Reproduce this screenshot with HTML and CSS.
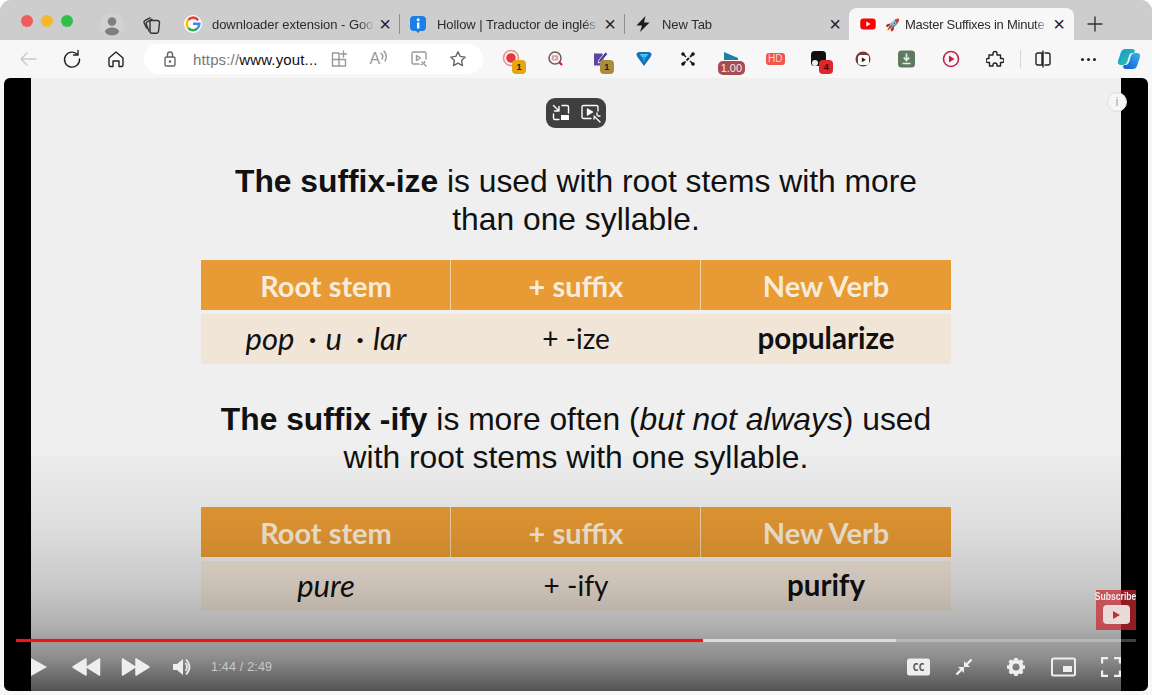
FILE: index.html
```html
<!DOCTYPE html>
<html>
<head>
<meta charset="utf-8"/>
<title>Master Suffixes in Minutes</title>
<link rel="stylesheet" href="styles.css">
</head>
<body>
<div class="window">

<!-- tab strip -->
<div class="tabstrip">
  <div class="lights"><i class="red"></i><i class="yellow"></i><i class="green"></i></div>
  <div class="avatar">
    <svg width="24" height="24" viewBox="0 0 24 24"><circle cx="12" cy="8.500" r="4.300" fill="#808080"/><ellipse cx="12" cy="18.500" rx="7" ry="4" fill="#808080"/></svg>
  </div>
  <div class="collections">
    <svg class="ico" width="20" height="20" viewBox="0 0 20 20"><path d="M8.500 5.500h7.500a2 2 0 0 1 2 2.300L17 16.500a2 2 0 0 1-2 1.800H10.500a2 2 0 0 1-2-2z" transform="translate(-.5 0)"/><path d="M7 16 4.300 9.500a2 2 0 0 1 1-2.700L10 4.200"/><path d="M4.500 13 2.200 8a2 2 0 0 1 1-2.700L8 2.800"/></svg>
  </div>
  <div class="tab sep">
    <span class="favicon google">
      <svg width="16" height="16" viewBox="0 0 16 16" fill="none" stroke-width="2.600"><path d="M13.200 4.200A6.300 6.300 0 0 0 3.300 3.900" stroke="#ea4335"/><path d="M3.300 3.900A6.300 6.300 0 0 0 3.300 12.100" stroke="#fbbc05"/><path d="M3.300 12.100A6.300 6.300 0 0 0 12.800 12" stroke="#34a853"/><path d="M12.800 12A6.300 6.300 0 0 0 14.300 7.800H8" stroke="#4285f4"/></svg>
    </span>
    <span class="tabtitle">downloader extension - Goo</span>
    <span class="close">×</span>
  </div>
  <div class="tab sep">
    <span class="favicon">
      <svg width="18" height="18" viewBox="0 0 18 18"><path d="M5 1h8a4 4 0 0 1 4 4v7a4 4 0 0 1-4 4h-2l-2 2-2-2H5a4 4 0 0 1-4-4V5a4 4 0 0 1 4-4z" fill="#1a7fe8"/><rect x="8" y="7.500" width="2.400" height="6" fill="#fff"/><circle cx="9.200" cy="4.800" r="1.500" fill="#fff"/></svg>
    </span>
    <span class="tabtitle">Hollow | Traductor de inglés</span>
    <span class="close">×</span>
  </div>
  <div class="tab">
    <span class="favicon">
      <svg width="16" height="18" viewBox="0 0 16 18"><path d="M10.500 1 1.500 10.500H7L5 17l9.500-9.500H9z" fill="#1b1b1b"/></svg>
    </span>
    <span class="tabtitle">New Tab</span>
    <span class="close">×</span>
  </div>
  <div class="tab active">
    <span class="favicon">
      <svg width="16" height="12" viewBox="0 0 18 14"><rect width="18" height="13" y=".5" rx="3.500" fill="#f00"/><path d="M7 4v6l5-3z" fill="#fff"/></svg>
    </span>
    <span class="rocket">🚀</span>
    <span class="tabtitle">Master Suffixes in Minute</span>
    <span class="close">×</span>
  </div>
  <div class="newtabbtn">
    <svg class="ico" width="16" height="16" viewBox="0 0 16 16"><path d="M8 1v14M1 8h14"/></svg>
  </div>
</div>

<!-- toolbar -->
<div class="toolbar">
  <div class="navbtn">
    <svg class="ico pale" width="18" height="18" viewBox="0 0 18 18"><path d="M17 9H2M8 3 2 9l6 6"/></svg>
  </div>
  <div class="navbtn">
    <svg class="ico dark" width="20" height="20" viewBox="0 0 20 20"><path d="M15.500 5.500A7.500 7.500 0 1 0 17.500 10"/><path d="M16 1.500v4.500h-4.500"/></svg>
  </div>
  <div class="navbtn">
    <svg class="ico dark" width="18" height="18" viewBox="0 0 18 18"><path d="M2 8 9 2l7 6v7a1.500 1.500 0 0 1-1.500 1.500H12V11H6v5.500H3.500A1.500 1.500 0 0 1 2 15z"/></svg>
  </div>
  <div class="address">
    <svg class="ico grey lock" width="14" height="16" viewBox="0 0 14 16"><rect x="2" y="6" width="10" height="9" rx="1.500"/><path d="M4.500 6V3.500a2.500 2.500 0 0 1 5 0V6"/><circle cx="7" cy="10.500" r=".6"/></svg>
    <span class="url"><span class="scheme">https://</span>www.yout...</span>
    <span class="addr-icons">
      <svg class="ico light" width="18" height="18" viewBox="0 0 18 18"><path d="M9 3H2.500v13h13V9.500M2.500 9.500h13M9 3v13M13.500 1v6M10.500 4h6"/></svg>
      <span class="readaloud">A<svg class="ico light" width="8" height="12" viewBox="0 0 8 12"><path d="M1 3q3 3 1 6M4 1q4 5 1 10"/></svg></span>
      <svg class="ico light" width="18" height="18" viewBox="0 0 18 18"><path d="M16 9V3.500A1.500 1.500 0 0 0 14.500 2h-11A1.500 1.500 0 0 0 2 3.500v9A1.500 1.500 0 0 0 3.500 14H9"/><path d="M6.500 5.500v5l4-2.500zM12 12l4 4M14.500 11.500v1M11 14.500h1"/></svg>
      <svg class="ico grey" width="18" height="18" viewBox="0 0 18 18"><path d="m9 1.800 2.200 4.600 5 .7-3.600 3.500.9 5L9 13.200l-4.500 2.400.9-5L1.800 7.100l5-.7z"/></svg>
    </span>
  </div>

  <div class="extensions">
    <div class="ext">
      <svg width="20" height="20" viewBox="0 0 20 20"><circle cx="9" cy="9" r="7.500" fill="none" stroke="#eb8f8f" stroke-width="1.600"/><circle cx="9" cy="9" r="4.800" fill="#e8383c"/></svg>
      <b class="badge gold">1</b>
    </div>
    <div class="ext">
      <svg width="18" height="18" viewBox="0 0 18 18"><circle cx="8" cy="8" r="6" fill="none" stroke="#6b5a5e" stroke-width="1.500"/><rect x="4.800" y="5.300" width="6.400" height="5.200" rx="1.200" fill="#e59aa4"/><path d="M6.900 6.400v3l2.500-1.500z" fill="#fff"/><path d="m12 12 3 3" stroke="#d8203a" stroke-width="2.400"/></svg>
    </div>
    <div class="ext">
      <svg width="18" height="20" viewBox="0 0 18 20"><path d="M3 4.500h8L13 7v9.500H3z" fill="#5b46a8"/><path d="M8 11 14.500 3l2.200 2-6.700 8-3 1z" fill="#4a3798" stroke="#f7f7f7" stroke-width=".8"/></svg>
      <b class="badge olive">1</b>
    </div>
    <div class="ext">
      <svg width="16" height="16" viewBox="0 0 16 16"><path d="M3.500 1h9q3 0 3 2.500 0 1.200-1 2.500L8 15 1.500 6q-1-1.300-1-2.500Q.5 1 3.500 1z" fill="#1570b8"/><path d="M3.500 3h9l-2.500 3.200h-4z" fill="#4fc0ee"/><path d="M6 6.200h4L8 11.500z" fill="#2a9ad8"/></svg>
    </div>
    <div class="ext">
      <svg width="16" height="16" viewBox="0 0 16 16"><path d="M3 13 13 3" stroke="#222" stroke-width="2" stroke-dasharray="3.500 1.500"/><path d="M3 3l3 3M10 10l3 3" stroke="#222" stroke-width="1.600"/><circle cx="3" cy="3" r="1.800" fill="#111"/><circle cx="13" cy="3" r="1.800" fill="#111"/><circle cx="3" cy="13" r="1.800" fill="#111"/><circle cx="13" cy="13" r="1.800" fill="#111"/></svg>
    </div>
    <div class="ext speed">
      <svg width="16" height="8" viewBox="0 0 16 8"><path d="M1 0v8h14v-2z" fill="#1f7fa5"/></svg>
      <b>1.00</b>
    </div>
    <div class="ext">
      <span class="hd">HD</span>
    </div>
    <div class="ext">
      <svg width="16" height="16" viewBox="0 0 16 16"><rect width="15" height="15" rx="3.500" fill="#111"/><circle cx="4" cy="12" r="3" fill="#eee"/></svg>
      <b class="badge redb">4</b>
    </div>
    <div class="ext">
      <svg width="18" height="18" viewBox="0 0 18 18"><circle cx="9" cy="9" r="7.500" fill="#7a3838"/><rect x="4" y="5" width="11" height="10" rx="2.500" fill="#fff"/><path d="M7.800 7.200v5l4-2.500z" fill="#222"/></svg>
    </div>
    <div class="ext">
      <svg width="17" height="18" viewBox="0 0 17 18"><rect y=".5" width="17" height="17" rx="3.500" fill="#5e7a60"/><path d="M8.500 3.500v6.500M5.700 7.500l2.800 3 2.800-3M4.500 13.500h8" stroke="#e8efe8" stroke-width="1.700" fill="none"/></svg>
    </div>
    <div class="ext">
      <svg width="18" height="18" viewBox="0 0 18 18"><circle cx="9" cy="9" r="7.500" fill="none" stroke="#c8204e" stroke-width="1.600"/><path d="M7 5.500v7l5.500-3.500z" fill="#c8204e"/></svg>
    </div>
    <div class="ext">
      <svg class="ico dark" width="18" height="18" viewBox="0 0 18 18"><path d="M7 3.500a2 2 0 0 1 4 0V5h3.500v3.500H16a2 2 0 0 1 0 4h-1.500V16H11v-1a2 2 0 0 0-4 0v1H3.500v-3.500H2a2 2 0 0 1 0-4h1V5h4z"/></svg>
    </div>
    <span class="divider"></span>
  </div>

  <div class="split">
    <svg class="ico dark" width="18" height="18" viewBox="0 0 18 18"><path d="M8 3H4a2 2 0 0 0-2 2v8a2 2 0 0 0 2 2h4zM11 3h3a2 2 0 0 1 2 2v8a2 2 0 0 1-2 2h-3M9 1v16"/></svg>
  </div>
  <div class="more"><i></i><i></i><i></i></div>
  <div class="copilot">
    <svg width="24" height="22" viewBox="0 0 24 22">
      <defs>
        <linearGradient id="copL" x1="0" y1="0" x2="1" y2="1"><stop offset="0" stop-color="#1f8fd8"/><stop offset=".6" stop-color="#22b8b0"/><stop offset="1" stop-color="#5fd08a"/></linearGradient>
        <linearGradient id="copR" x1="0" y1="1" x2="1" y2="0"><stop offset="0" stop-color="#1556d8"/><stop offset="1" stop-color="#36b4f0"/></linearGradient>
      </defs>
      <path d="M8.500 1H15q2.500 0 3 2l-1 2h-1.500q-2.500 0-3.500 3l-1.500 5q-1 4-5 4H4Q.2 17 1 13L3.800 4.500Q5 1 8.500 1z" fill="url(#copL)"/>
      <path d="M15.500 21H9q-2.500 0-3-2l1-2h1.500q2.500 0 3.500-3l1.500-5q1-4 5-4H20q3.800 0 3 4l-2.800 8.500Q19 21 15.500 21z" fill="url(#copR)"/>
    </svg>
  </div>
</div>

<!-- video -->
<div class="video">
  <div class="slide">
    <h2 class="heading"><b>The suffix-ize</b> is used with root stems with more<br>than one syllable.</h2>
    <div class="stable">
      <div class="shead">Root stem</div>
      <div class="shead">+ suffix</div>
      <div class="shead">New Verb</div>
      <div class="scell"><em>pop<span class="dot">•</span>u<span class="dot">•</span>lar</em></div>
      <div class="scell">+ -ize</div>
      <div class="scell"><b>popularize</b></div>
    </div>
    <h2 class="heading second"><b>The suffix -ify</b> is more often (<em>but not always</em>) used<br>with root stems with one syllable.</h2>
    <div class="stable">
      <div class="shead">Root stem</div>
      <div class="shead">+ suffix</div>
      <div class="shead">New Verb</div>
      <div class="scell"><em>pure</em></div>
      <div class="scell">+ -ify</div>
      <div class="scell"><b>purify</b></div>
    </div>
  </div>

  <div class="shade"></div>

  <div class="pill">
    <svg class="ico white" width="20" height="20" viewBox="0 0 20 20"><path d="M11 2.500h5a1.500 1.500 0 0 1 1.500 1.500v6M2.500 11v4a1.500 1.500 0 0 0 1.500 1.500h4M2.500 2.500 8 8M8 3.500V8H3.500"/><rect x="10" y="12" width="8" height="5" fill="#fff" stroke="none"/></svg>
    <svg class="ico white" width="22" height="20" viewBox="0 0 22 20"><path d="M18 8V4a1.500 1.500 0 0 0-1.500-1.500h-13A1.500 1.500 0 0 0 2 4v10a1.500 1.500 0 0 0 1.500 1.500H11"/><path d="M7.500 6v6l5-3z" fill="#fff"/><path d="M14 13l6 6M17 10v2M20 13h-2M14 16v-1"/></svg>
  </div>
  <div class="info">i</div>

  <div class="subscribe">
    <span>Subscribe</span>
    <div class="subbtn"><i></i></div>
  </div>

  <div class="progress">
    <div class="played"></div>
    <div class="buffered"></div>
  </div>

  <div class="controls">
    <svg width="18" height="20" viewBox="0 0 18 20" class="c-play"><path d="M1 1l16 9-16 9z" fill="#eee"/></svg>
    <svg width="30" height="22" viewBox="0 0 30 22" class="c-prev"><path d="M15 3v16L2 11zM28.500 3v16L16 11z" fill="#eee" stroke="#eee" stroke-width="1.500" stroke-linejoin="round"/></svg>
    <svg width="30" height="22" viewBox="0 0 30 22" class="c-next"><path d="M1.500 3v16L14 11zM15 3v16l13-8z" fill="#eee" stroke="#eee" stroke-width="1.500" stroke-linejoin="round"/></svg>
    <svg width="20" height="20" viewBox="0 0 20 20" class="c-vol"><path d="M1 7v6h4l6 5V2L5 7z" fill="#eee"/><path d="M13.500 6q3 4 0 8M14 2.500q7 7.500 0 15" fill="none" stroke="#eee" stroke-width="1.700"/></svg>
    <span class="time">1:44 / 2:49</span>
    <span class="spacer"></span>
    <svg width="24" height="18" viewBox="0 0 24 18" class="c-cc"><rect width="23" height="17" y=".5" rx="2.500" fill="#eee"/><text x="11.500" y="13" class="cc-text">CC</text></svg>
    <svg width="18" height="18" viewBox="0 0 18 18" class="c-mini"><path d="M1.500 16.500 7 11" stroke="#eee" stroke-width="2.400"/><path d="M3 9h6v6z" fill="#eee"/><path d="M16.500 1.500 11 7" stroke="#eee" stroke-width="2.400"/><path d="M9 3v6h6z" fill="#eee"/></svg>
    <svg width="20" height="20" viewBox="0 0 20 20" class="c-gear"><circle cx="10" cy="10" r="5.500" fill="none" stroke="#eee" stroke-width="4"/><path d="M10 1v18M1 10h18M3.600 3.600l12.800 12.800M16.400 3.600 3.600 16.400" stroke="#eee" stroke-width="3.600" stroke-dasharray="3.400 11.200"/></svg>
    <svg width="26" height="20" viewBox="0 0 26 20" class="c-pip"><rect x="1" y="1.500" width="23" height="17" rx="1.500" fill="none" stroke="#eee" stroke-width="2"/><rect x="12" y="9" width="9" height="6" fill="#eee"/></svg>
    <svg width="20" height="20" viewBox="0 0 20 20" class="c-full"><path d="M1 6.500V1h6M13 1h6v5.500M19 13.500V19h-6M7 19H1v-5.500" fill="none" stroke="#eee" stroke-width="2.400"/></svg>
  </div>
</div>

</div>
</body>
</html>
```

FILE: styles.css
```css
html, body {
   margin: 0;
   height: 100%;
   background-color: white;
   overflow: hidden;
}

body {
   font-family: "Liberation Sans", Arial, sans-serif;
}

.window {
   width: 1152px;
   height: 695px;
   background-color: #f7f7f7;
   border-radius: 11px 11px 0 0;
   overflow: hidden;
}

.ico {
   fill: none;
   stroke: #333;
   stroke-width: 1.400;
   stroke-linecap: round;
   stroke-linejoin: round;
}

.ico.pale { stroke: #c8c8c8; }
.ico.dark { stroke: #222; }
.ico.grey { stroke: #666; }
.ico.light { stroke: #999; }
.ico.white { stroke: #fff; }

/* tab strip */

.tabstrip {
   display: flex;
   align-items: flex-end;
   height: 40px;
   background-color: #cdcdcd;
}

.lights {
   display: flex;
   gap: 8px;
   width: 59px;
   padding-left: 21px;
   height: 32px;
   align-items: center;
   margin-bottom: 3px;
}

.lights i {
   display: block;
   width: 12px;
   height: 12px;
   border-radius: 50%;
}

.lights .red { background-color: #f35a5c; }
.lights .yellow { background-color: #f4b72e; }
.lights .green { background-color: #2fc04b; }

.avatar {
   display: flex;
   align-items: center;
   justify-content: center;
   width: 24px;
   height: 24px;
   margin: 0 0 3px 20px;
   border-radius: 50%;
   background-color: #d2d2d2;
   overflow: hidden;
}

.collections {
   display: flex;
   justify-content: center;
   align-items: center;
   width: 20px;
   height: 24px;
   margin: 0 14px 3px 18px;
}

.tab {
   display: flex;
   align-items: center;
   box-sizing: border-box;
   flex: none;
   width: 225px;
   height: 32px;
   padding: 0 6px 0 8px;
   font-size: 13px;
   color: #2b2b2b;
   position: relative;
}

.tab.sep::after {
   content: "";
   position: absolute;
   right: 1px;
   top: 6px;
   height: 20px;
   width: 1px;
   background-color: #8e8e8e;
}

.tab.active {
   margin-left: -2px;
   padding: 0 5px 0 10px;
   background-color: #f7f7f7;
   border-radius: 8px 8px 0 0;
}

.tab.active .tabtitle {
   letter-spacing: -.25px;
}

.favicon {
   display: flex;
   align-items: center;
   justify-content: center;
   flex: none;
   width: 18px;
   height: 18px;
   margin-right: 10px;
}

.favicon.google {
   background-color: white;
   border-radius: 50%;
}

.rocket {
   flex: none;
   width: 18px;
   margin: 0 4px 0 -4px;
   font-size: 12px;
   font-family: "Noto Sans", "DejaVu Sans", sans-serif;
   text-align: center;
}

.tabtitle {
   flex: 1;
   min-width: 0;
   white-space: nowrap;
   overflow: hidden;
   letter-spacing: -.05px;
   -webkit-mask-image: linear-gradient(to right, black 90%, transparent 100%);
   mask-image: linear-gradient(to right, black 90%, transparent 100%);
}

.close {
   flex: none;
   width: 20px;
   font-size: 20px;
   line-height: 20px;
   text-align: center;
   color: #222;
}

.newtabbtn {
   display: flex;
   justify-content: center;
   align-items: center;
   width: 42px;
   height: 32px;
}

/* toolbar */

.toolbar {
   display: flex;
   align-items: center;
   height: 38px;
   padding-left: 6px;
   background-color: #f7f7f7;
}

.navbtn {
   display: flex;
   justify-content: center;
   flex: none;
   width: 44px;
}

.address {
   display: flex;
   align-items: center;
   box-sizing: border-box;
   flex: none;
   width: 339px;
   height: 30px;
   margin-left: 6px;
   padding: 0 16px 0 19px;
   background-color: white;
   border-radius: 15px;
   font-size: 15px;
   color: #111;
}

.lock {
   flex: none;
}

.url {
   flex: none;
   width: 131px;
   margin-left: 16px;
   white-space: nowrap;
   letter-spacing: .15px;
}

.scheme {
   color: #777;
}

.addr-icons {
   display: flex;
   align-items: center;
   justify-content: space-between;
   flex: 1;
   padding-left: 6px;
}

.readaloud {
   display: flex;
   align-items: flex-start;
   color: #999;
   font-size: 16px;
   font-weight: normal;
}

.extensions {
   display: flex;
   align-items: center;
   flex: none;
   margin-left: 7px;
   width: 531px;
}

.ext {
   position: relative;
   display: flex;
   justify-content: center;
   align-items: center;
   flex: none;
   width: 43.900px;
   height: 30px;
}

.badge {
   position: absolute;
   left: 22px;
   top: 16px;
   width: 14px;
   height: 14px;
   line-height: 14px;
   border-radius: 4px;
   font-size: 9px;
   font-weight: bold;
   text-align: center;
   color: #222;
}

.badge.gold { background-color: #e5a60f; }
.badge.olive { background-color: #a88d3a; }
.badge.redb { background-color: #e0262d; color: #3a0a0a; }

.ext.speed {
   flex-direction: column;
   justify-content: flex-start;
}

.ext.speed svg {
   margin-top: 8px;
   flex: none;
}

.ext.speed b {
   margin-top: 1px;
   padding: 0 3px;
   border-radius: 5px;
   background-color: #a84a50;
   color: #eee;
   font-size: 11px;
   font-weight: normal;
   line-height: 14px;
}

.hd {
   padding: 1px 2px;
   border-radius: 3px;
   background-color: #f0564c;
   color: #fbd5d1;
   font-size: 10px;
   line-height: 10px;
}

.divider {
   flex: none;
   width: 1px;
   height: 18px;
   background-color: #d6d6d6;
   margin-left: 3px;
}

.split {
   display: flex;
   justify-content: center;
   width: 44px;
}

.more {
   display: flex;
   justify-content: center;
   gap: 3px;
   width: 46px;
}

.more i {
   display: block;
   width: 3px;
   height: 3px;
   border-radius: 50%;
   background-color: #222;
}

.copilot {
   display: flex;
   justify-content: center;
   width: 36px;
}

/* video */

.video {
   position: relative;
   height: 613px;
   margin: 0 4px;
   padding: 0 27px;
   background-color: black;
   border-radius: 6px;
   overflow: hidden;
}

.slide {
   display: flex;
   flex-direction: column;
   align-items: center;
   height: 100%;
   background-color: #efefef;
}

.heading {
   margin: 85px 0 22px;
   font-size: 31.800px;
   font-weight: normal;
   line-height: 37.500px;
   text-align: center;
   color: #111;
}

.heading.second {
   margin: 37px 0 31px;
}

.stable {
   display: grid;
   grid-template-columns: repeat(3, 250px);
   grid-template-rows: 50px 50px;
   row-gap: 4px;
   font-family: Lato, sans-serif;
}

.shead {
   display: flex;
   align-items: center;
   justify-content: center;
   background-color: #e89a34;
   box-shadow: -1px 0 0 #f3d5a8;
   color: #f8ecd9;
   font-size: 29px;
   font-weight: bold;
}

.shead:first-child {
   box-shadow: none;
}

.scell {
   display: flex;
   align-items: center;
   justify-content: center;
   box-sizing: border-box;
   padding-bottom: 3px;
   background-color: #f1e5d8;
   color: #111;
   font-size: 28px;
}

.scell em {
   font-size: 31px;
}

.scell b {
   font-size: 29.500px;
}

.dot {
   position: relative;
   top: -5px;
   margin: 0 9px 0 14px;
   font-size: 14px;
   font-style: normal;
}

.shade {
   position: absolute;
   left: 0;
   right: 0;
   bottom: 0;
   height: 245px;
   background: linear-gradient(to bottom, rgba(0,0,0,0), rgba(0,0,0,.08) 34%, rgba(0,0,0,.16) 57%, rgba(0,0,0,.26) 73%, rgba(0,0,0,.42) 87%, rgba(0,0,0,.65));
}

.pill {
   position: absolute;
   left: 542px;
   top: 20px;
   display: flex;
   align-items: center;
   justify-content: center;
   gap: 9px;
   width: 60px;
   height: 30px;
   background-color: #3f3f3f;
   border-radius: 9px;
}

.info {
   position: absolute;
   right: 21px;
   top: 14px;
   width: 18px;
   height: 18px;
   border: 1px solid #ddd;
   border-radius: 50%;
   background-color: #f6f6f6;
   color: #aaa;
   font-size: 13px;
   line-height: 18px;
   text-align: center;
}

.subscribe {
   position: absolute;
   left: 1092px;
   top: 512px;
   display: flex;
   flex-direction: column;
   align-items: center;
   width: 40px;
   height: 40px;
   background-color: rgba(200, 40, 50, .72);
}

.subscribe span {
   font-size: 11px;
   font-weight: bold;
   line-height: 13px;
   color: #eee;
   transform: scaleX(.78);
   white-space: nowrap;
}

.subbtn {
   display: flex;
   justify-content: center;
   align-items: center;
   width: 27px;
   height: 19px;
   margin-top: 2px;
   border-radius: 4px;
   background-color: #eadada;
}

.subbtn i {
   display: block;
   border-style: solid;
   border-width: 4px 0 4px 7px;
   border-color: transparent transparent transparent #c0303a;
}

.progress {
   position: absolute;
   left: 12px;
   top: 561px;
   width: 1120px;
   height: 3px;
   background-color: rgba(255, 255, 255, .25);
}

.played {
   position: absolute;
   left: 0;
   top: 0;
   z-index: 1;
   width: 687px;
   height: 3px;
   background-color: #f01515;
   box-shadow: 0 0 1px rgba(240, 21, 21, .7);
}

.buffered {
   position: absolute;
   left: 0;
   top: 0;
   width: 880px;
   height: 3px;
   background-color: rgba(235, 235, 235, .7);
}

.controls {
   position: absolute;
   left: 0;
   right: 0;
   top: 576px;
   display: flex;
   align-items: center;
   height: 26px;
}

.c-play { margin-left: 26px; }
.c-prev { margin-left: 23px; }
.c-next { margin-left: 20px; }
.c-vol { margin-left: 21px; }

.time {
   margin-left: 19px;
   color: #c9c9c9;
   font-size: 12.500px;
   letter-spacing: .2px;
}

.spacer {
   flex: 1;
}

.c-mini { margin-left: 24px; }
.c-gear { margin-left: 33px; }
.c-pip { margin-left: 25px; }
.c-full { margin: 0 27px 0 24px; }

.cc-text {
   font-family: "DejaVu Sans Mono", monospace;
   font-size: 10px;
   font-weight: bold;
   fill: #555;
   text-anchor: middle;
}
```
